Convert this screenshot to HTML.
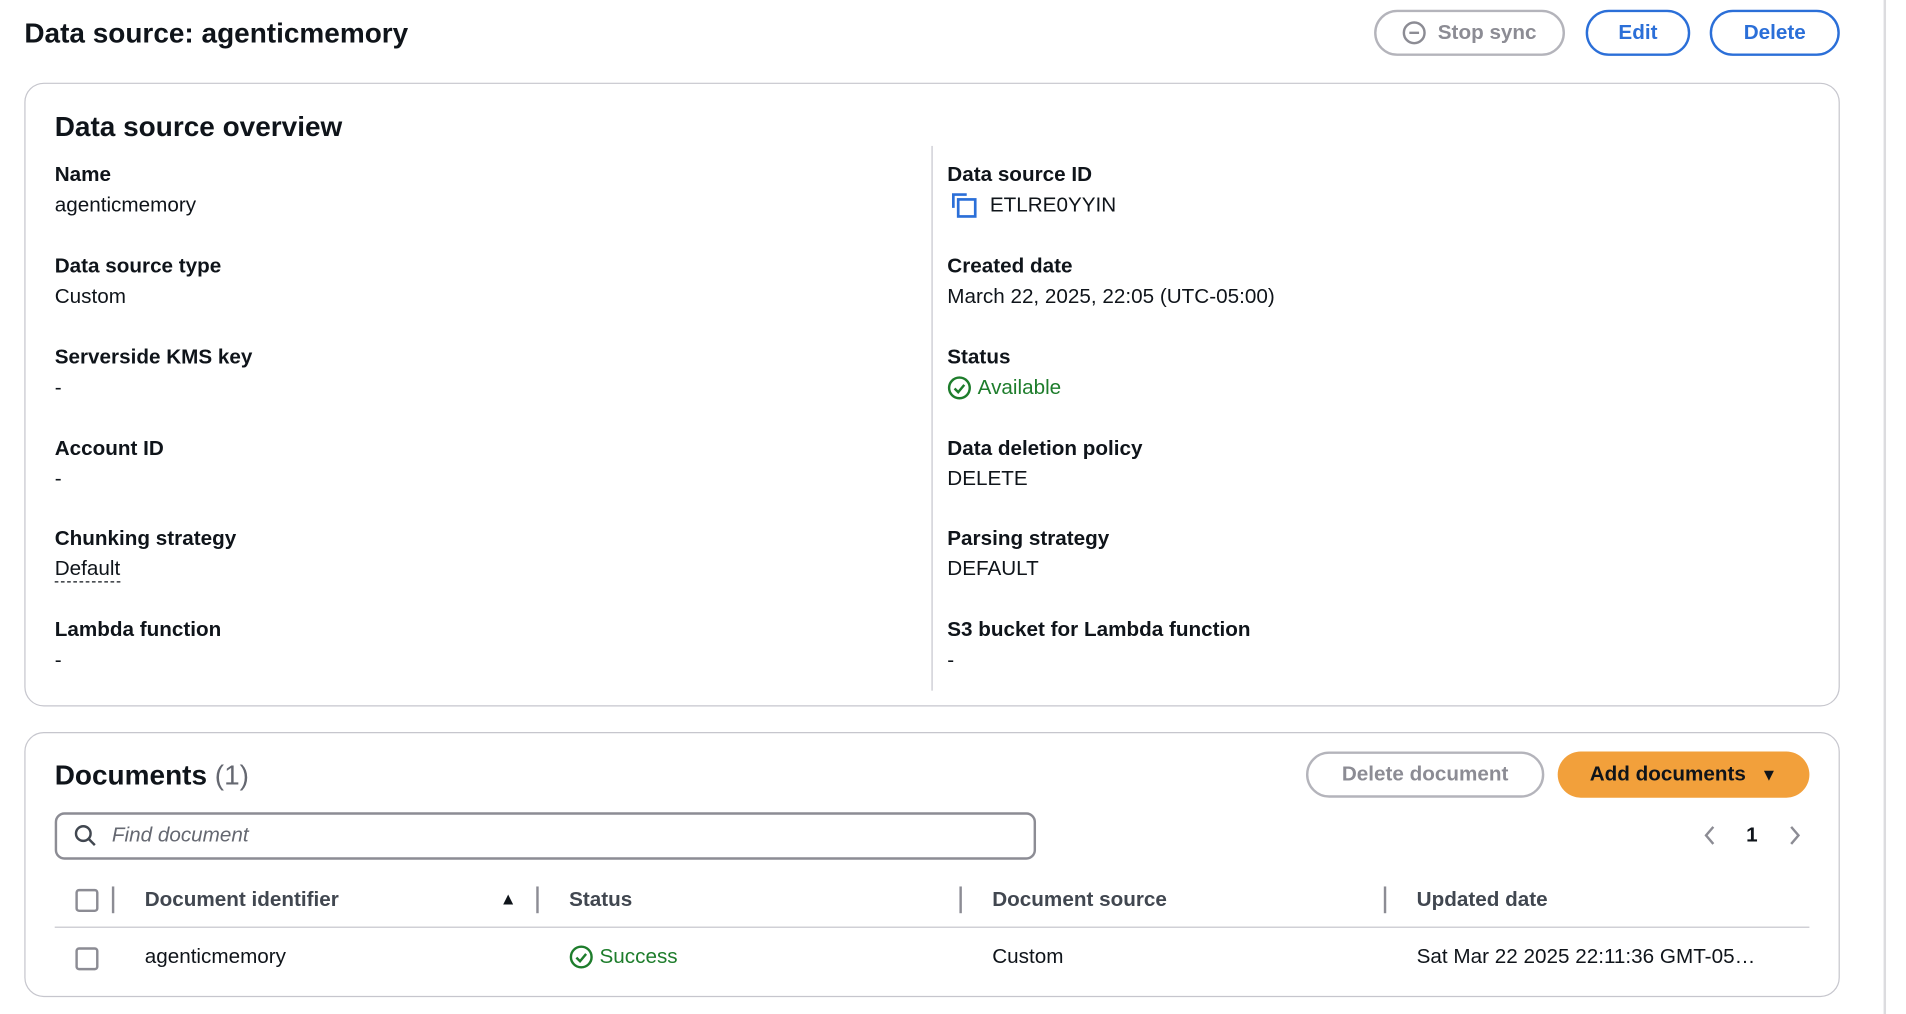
<!DOCTYPE html>
<html><head><meta charset="utf-8"><style>
html,body{margin:0;padding:0;background:#fff;width:1906px;height:1014px;overflow:hidden}
#w{position:absolute;left:0;top:0;width:1568px;height:834px;transform:scale(1.216,1.216);transform-origin:0 0;font-family:"Liberation Sans",sans-serif;color:#0f141a}
.a{position:absolute;white-space:nowrap}
.t{font-size:17px;line-height:20px}
.b{font-weight:bold}
.btn{position:absolute;box-sizing:border-box;border:2px solid #2b6fd8;border-radius:20px;height:38px;color:#2b6fd8;font-weight:bold;font-size:17px;display:flex;align-items:center;justify-content:center;background:#fff}
.panel{position:absolute;left:20px;width:1493px;box-sizing:border-box;border:1px solid #c6c6cd;border-radius:16px;background:#fff}
.lab{font-weight:bold;font-size:17px}
.sep{position:absolute;width:2px;height:22px;background:#8c8c94;top:729px}
.cb{position:absolute;width:15px;height:15px;border:2px solid #8c8c94;border-radius:3px}
</style></head><body><div id="w">
<div class="a b" style="left:20px;top:12px;font-size:23px;line-height:30px">Data source: agenticmemory</div>
<div class="btn" style="left:1130px;top:8px;width:157px;border-color:#b4b4bb;color:#8c8c94"><svg width="20" height="20" viewBox="0 0 20 20" style="margin-right:9px"><circle cx="10" cy="10" r="8.5" fill="none" stroke="#8c8c94" stroke-width="2"/><line x1="6" y1="10" x2="14" y2="10" stroke="#8c8c94" stroke-width="2"/></svg>Stop sync</div>
<div class="btn" style="left:1304px;top:8px;width:86px">Edit</div>
<div class="btn" style="left:1406px;top:8px;width:107px">Delete</div>
<div style="position:absolute;left:1549px;top:0;width:2px;height:834px;background:#dcdcdf"></div>

<div class="panel" style="top:68px;height:513px"></div>
<div class="a b" style="left:45px;top:89px;font-size:23px;line-height:30px">Data source overview</div>
<div style="position:absolute;left:766px;top:120px;width:1px;height:448px;background:#c6c6cd"></div>

<div class="a t lab" style="left:45px;top:134px">Name</div>
<div class="a t" style="left:45px;top:159px">agenticmemory</div>
<div class="a t lab" style="left:45px;top:209px">Data source type</div>
<div class="a t" style="left:45px;top:234px">Custom</div>
<div class="a t lab" style="left:45px;top:284px">Serverside KMS key</div>
<div class="a t" style="left:45px;top:309px">-</div>
<div class="a t lab" style="left:45px;top:359px">Account ID</div>
<div class="a t" style="left:45px;top:384px">-</div>
<div class="a t lab" style="left:45px;top:433px">Chunking strategy</div>
<div class="a t" style="left:45px;top:458px;border-bottom:1px dashed #0f141a">Default</div>
<div class="a t lab" style="left:45px;top:508px">Lambda function</div>
<div class="a t" style="left:45px;top:533px">-</div>

<div class="a t lab" style="left:779px;top:134px">Data source ID</div>
<svg class="a" style="left:782px;top:158px" width="22" height="22" viewBox="0 0 22 22"><path d="M2 13V2h11" fill="none" stroke="#2b6fd8" stroke-width="2.2"/><rect x="6" y="6" width="14" height="14" fill="none" stroke="#2b6fd8" stroke-width="2.2"/></svg>
<div class="a t" style="left:814px;top:159px">ETLRE0YYIN</div>
<div class="a t lab" style="left:779px;top:209px">Created date</div>
<div class="a t" style="left:779px;top:234px">March 22, 2025, 22:05 (UTC-05:00)</div>
<div class="a t lab" style="left:779px;top:284px">Status</div>
<svg class="a" style="left:779px;top:309px" width="20" height="20" viewBox="0 0 20 20"><circle cx="10" cy="10" r="8.5" fill="none" stroke="#1e7d2c" stroke-width="2"/><path d="M6 10.5l3 3 5-6" fill="none" stroke="#1e7d2c" stroke-width="2"/></svg>
<div class="a t" style="left:804px;top:309px;color:#1e7d2c">Available</div>
<div class="a t lab" style="left:779px;top:359px">Data deletion policy</div>
<div class="a t" style="left:779px;top:384px">DELETE</div>
<div class="a t lab" style="left:779px;top:433px">Parsing strategy</div>
<div class="a t" style="left:779px;top:458px">DEFAULT</div>
<div class="a t lab" style="left:779px;top:508px">S3 bucket for Lambda function</div>
<div class="a t" style="left:779px;top:533px">-</div>

<div class="panel" style="top:602px;height:218px"></div>
<div class="a" style="left:45px;top:622px;font-size:23px;line-height:30px"><b>Documents</b> <span style="color:#656871">(1)</span></div>
<div class="btn" style="left:1074px;top:618px;width:196px;border-color:#b4b4bb;color:#8c8c94">Delete document</div>
<div class="btn" style="left:1281px;top:618px;width:207px;border:none;background:#f2a03b;color:#0f141a">Add documents<span style="margin-left:12px;font-size:14px">▼</span></div>
<div style="position:absolute;left:45px;top:668px;width:807px;height:39px;box-sizing:border-box;border:2px solid #8c8c94;border-radius:8px"></div>
<svg class="a" style="left:60px;top:677px" width="20" height="20" viewBox="0 0 20 20"><circle cx="8.5" cy="8.5" r="6" fill="none" stroke="#414750" stroke-width="2"/><line x1="13" y1="13" x2="18" y2="18" stroke="#414750" stroke-width="2"/></svg>
<div class="a t" style="left:92px;top:677px;font-style:italic;color:#656871">Find document</div>
<svg class="a" style="left:1400px;top:678px" width="12" height="18" viewBox="0 0 12 18"><path d="M9 2L3 9l6 7" fill="none" stroke="#8c8c94" stroke-width="2"/></svg>
<div class="a t b" style="left:1436px;top:677px">1</div>
<svg class="a" style="left:1470px;top:678px" width="12" height="18" viewBox="0 0 12 18"><path d="M3 2l6 7-6 7" fill="none" stroke="#8c8c94" stroke-width="2"/></svg>

<div class="cb" style="left:62px;top:731px"></div>
<div class="sep" style="left:92px"></div>
<div class="a t b" style="left:119px;top:730px;color:#414750">Document identifier</div>
<div class="a" style="left:411px;top:731px;font-size:14px">▲</div>
<div class="sep" style="left:441px"></div>
<div class="a t b" style="left:468px;top:730px;color:#414750">Status</div>
<div class="sep" style="left:789px"></div>
<div class="a t b" style="left:816px;top:730px;color:#414750">Document source</div>
<div class="sep" style="left:1138px"></div>
<div class="a t b" style="left:1165px;top:730px;color:#414750">Updated date</div>
<div style="position:absolute;left:45px;top:762px;width:1443px;height:1px;background:#c6c6cd"></div>
<div class="cb" style="left:62px;top:779px"></div>
<div class="a t" style="left:119px;top:777px">agenticmemory</div>
<svg class="a" style="left:468px;top:777px" width="20" height="20" viewBox="0 0 20 20"><circle cx="10" cy="10" r="8.5" fill="none" stroke="#1e7d2c" stroke-width="2"/><path d="M6 10.5l3 3 5-6" fill="none" stroke="#1e7d2c" stroke-width="2"/></svg>
<div class="a t" style="left:493px;top:777px;color:#1e7d2c">Success</div>
<div class="a t" style="left:816px;top:777px">Custom</div>
<div class="a t" style="left:1165px;top:777px">Sat Mar 22 2025 22:11:36 GMT-05…</div>
</div></body></html>
